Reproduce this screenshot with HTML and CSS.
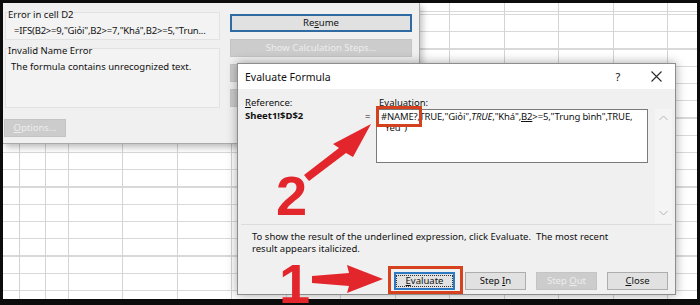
FILE: index.html
```html
<!DOCTYPE html>
<html lang="vi">
<head>
    <meta charset="UTF-8">
    <title>Evaluate Formula</title>
    <link rel="stylesheet" href="styles.css">
</head>
<body>
    <div class="desk">
        <div class="sheet">
            <div class="rowhead"></div>
            <div class="cells"></div>
        </div>

        <section class="err-dlg">
            <div class="err-main">
                <div class="panel panel-top">
                    <div class="err-label">Error in cell D2</div>
                    <div class="err-formula">=IFS(B2&gt;=9,"Giỏi",B2&gt;=7,"Khá",B2&gt;=5,"Trun...</div>
                </div>
                <div class="panel panel-info">
                    <div class="err-label">Invalid Name Error</div>
                    <div class="err-text">The formula contains unrecognized text.</div>
                </div>
                <button class="btn off btn-options"><u>O</u>ptions...</button>
            </div>
            <div class="err-side">
                <button class="btn btn-default">Re<u>s</u>ume</button>
                <button class="btn off">Show Calculation Steps...</button>
                <button class="btn off"></button>
                <button class="btn off"></button>
            </div>
        </section>

        <section class="ev-dlg">
            <div class="ev-title">
                <span>Evaluate Formula</span>
                <div class="ev-tools">
                    <span class="tool">?</span>
                    <span class="tool">
                        <svg width="11" height="11" viewBox="0 0 11 11"><path d="M0.5 0.5L10.5 10.5M10.5 0.5L0.5 10.5" stroke="#2b2b2b" stroke-width="1.1" fill="none"/></svg>
                    </span>
                </div>
            </div>
            <div class="ev-body">
                <div class="lbl"><u>R</u>eference:</div>
                <div></div>
                <div class="lbl lbl-eval">E<u>v</u>aluation:</div>
                <div></div>
                <div></div>

                <div class="ref">Sheet1!$D$2</div>
                <div class="eq">=</div>
                <div class="ev-box">
                    <span class="hl">#NAME?</span>,TRUE,"Giỏi",<i>TRUE</i>,"Khá",<u>B2</u>&gt;=5,"Trung bình",TRUE,<br>"Yeu")
                </div>
                <div></div>
                <div class="scroll">
                    <svg width="9" height="6" viewBox="0 0 9 6"><path d="M0.5 5L4.5 1L8.5 5" stroke="#b4b4b4" fill="none"/></svg>
                    <svg width="9" height="6" viewBox="0 0 9 6"><path d="M0.5 1L4.5 5L8.5 1" stroke="#b4b4b4" fill="none"/></svg>
                </div>
            </div>
            <div class="ev-foot">
                <p class="hint">To show the result of the underlined expression, click Evaluate.&nbsp; The most recent<br>result appears italicized.</p>
                <div class="ev-buttons">
                    <button class="btn btn-focus marked"><span class="focus-ring"><u>E</u>valuate</span></button>
                    <button class="btn">Step <u>I</u>n</button>
                    <button class="btn off">Step <u>O</u>ut</button>
                    <button class="btn"><u>C</u>lose</button>
                </div>
            </div>
        </section>
    </div>

    <svg class="arrows" width="700" height="305" viewBox="0 0 700 305">
        <polygon points="312,276 349,273 347,265 383,279 347,293 349,286 312,283" fill="#e3262b"/>
        <polygon points="304,175 339,148 333,144 371,124 353,157 346,153 309,181" fill="#e3262b"/>
    </svg>
    <div class="num num-two">2</div>
    <div class="num num-one">1</div>
</body>
</html>
```

FILE: styles.css
```css
body {
    margin: 0;
    width: 700px;
    height: 305px;
    overflow: hidden;
    position: relative;
    background-color: #0c0c0c;
    font-family: "Noto Sans", "Open Sans", sans-serif;
    font-size: 9.5px;
    color: #111111;
}

.desk {
    position: relative;
    width: 694px;
    height: 296px;
    margin: 3px 3px 0;
    overflow: hidden;
}

/* spreadsheet behind the dialogs */
.sheet {
    display: flex;
    height: 100%;
    background-color: #ffffff;
    background-image: repeating-linear-gradient(to bottom, #d9d9d9 0, #d9d9d9 1px, transparent 1px, transparent 17.25px);
    background-position: 0 11px;
}

.rowhead {
    width: 16px;
    border-right: 1px solid #d2d2d2;
}

.cells {
    flex: 1;
    background-image: repeating-linear-gradient(to right, #d4d4d4 0, #d4d4d4 1px, transparent 1px, transparent 54.5px);
    background-position: 48px 0;
}

button {
    font-family: inherit;
    font-size: inherit;
}

.btn {
    box-sizing: border-box;
    height: 18px;
    padding: 0;
    border: 1px solid #adadad;
    background-color: #e1e1e1;
    color: #111111;
    line-height: 14px;
    text-align: center;
}

.btn.off {
    background-color: #cccccc;
    border-color: #c4c4c4;
    color: #ececec;
}

/* Error checking dialog */
.err-dlg {
    position: absolute;
    left: 0;
    top: 0;
    width: 416px;
    height: 140px;
    display: grid;
    grid-template-columns: 222px 182px;
    column-gap: 5px;
    background-color: #f0f0f0;
    border-right: 1px solid #a9a9a9;
    border-bottom: 1px solid #a9a9a9;
    box-shadow: 2px 3px 7px rgba(0, 0, 0, 0.28);
}

.err-main {
    padding: 9px 5px 0 2px;
}

.panel {
    box-sizing: border-box;
    border: 1px solid #e2e2e2;
    background-color: #f3f3f3;
}

.panel-top {
    height: 28px;
}

.panel-info {
    height: 60px;
    margin-top: 8px;
}

.err-label {
    margin-top: -4px;
    padding-left: 2px;
    line-height: 12px;
}

.err-formula {
    margin-top: 4px;
    padding-left: 8px;
    line-height: 12px;
    letter-spacing: -0.2px;
}

.err-text {
    margin-top: 4px;
    padding-left: 5px;
    line-height: 12px;
}

.btn-options {
    width: 62px;
    margin: 11px 0 0 -1px;
}

.err-side {
    display: flex;
    flex-direction: column;
    gap: 7px;
    padding-top: 11px;
}

.btn-default {
    border: 2px solid #2f6aa3;
    line-height: 12px;
}

/* Evaluate Formula dialog */
.ev-dlg {
    position: absolute;
    left: 234px;
    top: 60px;
    width: 439px;
    height: 232px;
    box-sizing: border-box;
    display: flex;
    flex-direction: column;
    background-color: #f0f0f0;
    border: 1px solid #8d8d8d;
    box-shadow: 0 0 10px rgba(0, 0, 0, 0.35);
}

.ev-title {
    height: 25px;
    display: flex;
    align-items: center;
    padding-left: 7px;
    background-color: #ffffff;
    font-size: 10.5px;
}

.ev-tools {
    display: flex;
    gap: 18px;
    margin-left: auto;
    margin-right: 9px;
}

.tool {
    width: 20px;
    display: flex;
    justify-content: center;
    align-items: center;
    font-size: 11px;
}

.ev-body {
    display: grid;
    grid-template-columns: 119px 12px 272px 7px 17px;
    grid-template-rows: 13px 54px 60px;
    padding: 7px 0 0 7px;
}

.lbl {
    line-height: 13px;
}

.lbl-eval {
    padding-left: 3px;
}

.ref {
    font-weight: bold;
    line-height: 14px;
}

.eq {
    padding-left: 1px;
    line-height: 16px;
}

.ev-box {
    box-sizing: border-box;
    padding: 1px 4px;
    background-color: #ffffff;
    border: 1px solid #7a7a7a;
    line-height: 11px;
    letter-spacing: -0.15px;
    white-space: nowrap;
}

.hl {
    position: relative;
}

.hl::after {
    content: "";
    position: absolute;
    left: -5px;
    right: -4px;
    top: -4px;
    bottom: -4px;
    border: 3px solid #d4411f;
}

.scroll {
    grid-row: 2 / 4;
    grid-column: 5;
    display: flex;
    flex-direction: column;
    justify-content: space-between;
    align-items: center;
    padding: 6px 0 7px;
    background-color: #f4f4f4;
}

.ev-foot {
    margin: 1px 3px 0;
    border-top: 1px solid #dcdcdc;
}

.hint {
    margin: 6px 0 0;
    padding-left: 11px;
    line-height: 12px;
}

.ev-buttons {
    display: flex;
    justify-content: flex-end;
    gap: 10px;
    margin-top: 17px;
    padding-right: 4px;
}

.ev-buttons .btn {
    width: 61px;
}

.btn-focus {
    border: 2px solid #2d7ac2;
    line-height: 12px;
}

.focus-ring {
    display: block;
    margin: 1px;
    outline: 1px dotted #333333;
    line-height: 10px;
}

.marked {
    position: relative;
}

.marked::after {
    content: "";
    position: absolute;
    left: -8px;
    right: -10px;
    top: -8px;
    bottom: -6px;
    border: 3px solid #d6421e;
}

/* annotations */
.arrows {
    position: absolute;
    left: 0;
    top: 0;
}

.num {
    position: absolute;
    font-family: "Liberation Sans", Arial, sans-serif;
    font-weight: bold;
    font-size: 56px;
    line-height: 56px;
    color: #e3262b;
}

.num-two {
    left: 276px;
    top: 168px;
}

.num-one {
    left: 279px;
    top: 256px;
}
```
